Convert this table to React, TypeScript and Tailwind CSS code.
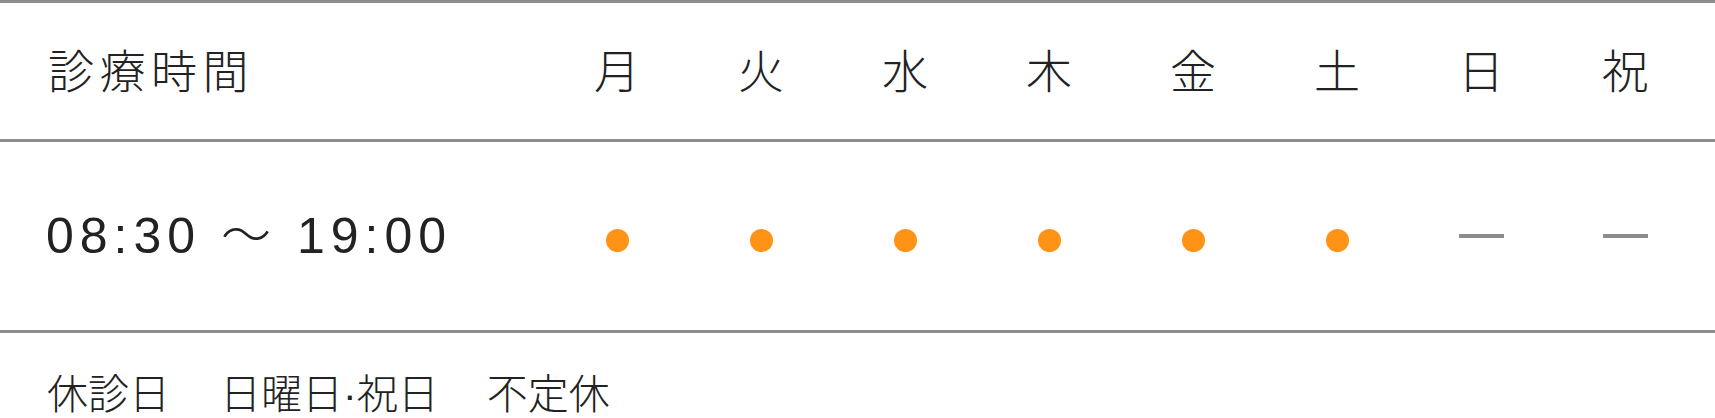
const days = ["月", "火", "水", "木", "金", "土", "日", "祝"];
const open = [true, true, true, true, true, true, false, false];

export default function App() {
  return (
    <div
      className="w-[1715px] h-[418px] overflow-hidden bg-white text-[#222222] font-light"
      style={{ fontFamily: '"Noto Sans CJK JP", "Noto Sans", sans-serif' }}
    >
      <div className="border-t-[3px] border-[#8c8c8c]">
        <div className="grid grid-cols-[545px_repeat(8,144px)] h-[136px] items-center pb-[6px]">
          <div className="pl-[48px] text-[46px] tracking-[0.12em] leading-none">診療時間</div>
          {days.map((d) => (
            <div key={d} className="text-center text-[46px] leading-none">
              {d}
            </div>
          ))}
        </div>
      </div>
      <div className="border-t-[3px] border-[#8c8c8c]">
        <div className="grid grid-cols-[545px_repeat(8,144px)] h-[188px] items-center">
          <div
            className="pl-[46px] text-[50px] tracking-[0.12em] leading-none"
            style={{ fontFamily: '"Liberation Sans", "Noto Sans CJK JP", sans-serif' }}
          >
            08:30 〜 19:00
          </div>
          {open.map((o, i) => (
            <div key={i} className="flex justify-center">
              {o ? (
                <span className="block w-[23px] h-[23px] rounded-full bg-[#ff9316] mt-[8px]" />
              ) : (
                <span className="block w-[45px] h-[4px] bg-[#8c8c8c]" />
              )}
            </div>
          ))}
        </div>
      </div>
      <div className="border-t-[3px] border-[#8c8c8c] pt-[38px] pl-[47px]">
        <p className="flex text-[41px] leading-none">
          <span>休診日</span>
          <span className="ml-[50px]">
            日曜日<span style={{ fontFamily: '"Liberation Sans", sans-serif' }}>·</span>祝日
          </span>
          <span className="ml-[48px]">不定休</span>
        </p>
      </div>
    </div>
  );
}
